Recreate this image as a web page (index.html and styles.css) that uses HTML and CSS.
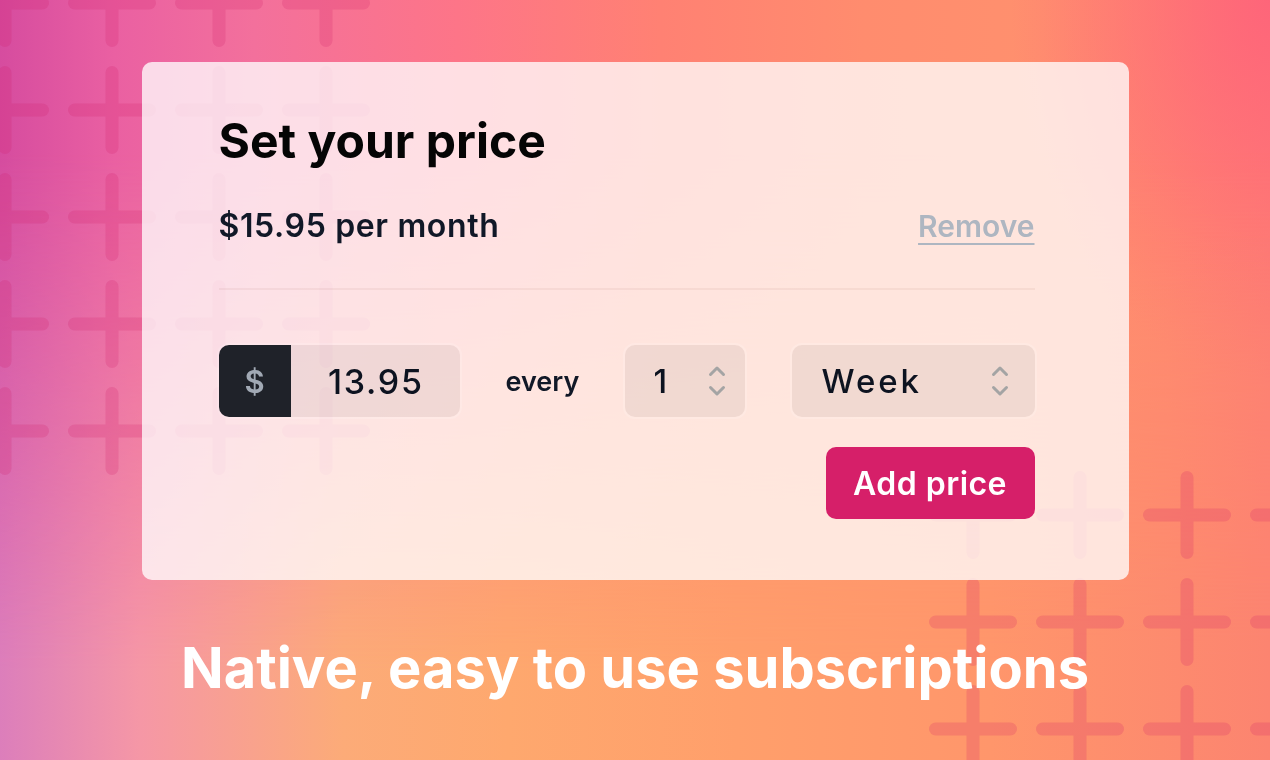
FILE: index.html
```html
<!DOCTYPE html>
<html lang="en">
<head>
<meta charset="utf-8">
<title>Set your price</title>
<link rel="stylesheet" href="styles.css">
</head>
<body>
<div class="page">
  <svg class="pattern" width="1270" height="760" viewBox="0 0 1270 760" aria-hidden="true">
    <defs>
      <g id="plus">
        <line x1="-37.5" y1="0" x2="37.5" y2="0"/>
        <line x1="0" y1="-37.5" x2="0" y2="37.5"/>
      </g>
    </defs>
    <g class="plus-group" opacity="0.2" stroke="#d0206a" stroke-width="13" stroke-linecap="round">
      <use href="#plus" x="5" y="3"/><use href="#plus" x="112" y="3"/><use href="#plus" x="219" y="3"/><use href="#plus" x="326" y="3"/>
      <use href="#plus" x="5" y="110"/><use href="#plus" x="112" y="110"/><use href="#plus" x="219" y="110"/><use href="#plus" x="326" y="110"/>
      <use href="#plus" x="5" y="217"/><use href="#plus" x="112" y="217"/><use href="#plus" x="219" y="217"/><use href="#plus" x="326" y="217"/>
      <use href="#plus" x="5" y="324"/><use href="#plus" x="112" y="324"/><use href="#plus" x="219" y="324"/><use href="#plus" x="326" y="324"/>
      <use href="#plus" x="5" y="431"/><use href="#plus" x="112" y="431"/><use href="#plus" x="219" y="431"/><use href="#plus" x="326" y="431"/>
    </g>
    <g class="plus-group" opacity="0.2" stroke="#d0206a" stroke-width="13" stroke-linecap="round">
      <use href="#plus" x="973" y="515"/><use href="#plus" x="1080" y="515"/><use href="#plus" x="1187" y="515"/><use href="#plus" x="1294" y="515"/>
      <use href="#plus" x="973" y="622"/><use href="#plus" x="1080" y="622"/><use href="#plus" x="1187" y="622"/><use href="#plus" x="1294" y="622"/>
      <use href="#plus" x="973" y="729"/><use href="#plus" x="1080" y="729"/><use href="#plus" x="1187" y="729"/><use href="#plus" x="1294" y="729"/>
    </g>
  </svg>

  <main class="content">
    <section class="card">
      <h1 class="card-title">Set your price</h1>
      <div class="price-row">
        <span class="price-current">$15.95 per month</span>
        <a class="remove" href="#">Remove</a>
      </div>
      <hr class="divider">
      <div class="input-row">
        <div class="amount">
          <span class="currency">$</span>
          <span class="amount-value">13.95</span>
        </div>
        <span class="every">every</span>
        <div class="select select-count">
          <span class="select-value">1</span>
          <svg class="chevrons" width="18" height="32" viewBox="0 0 18 32" aria-hidden="true">
            <polyline points="2.5,9.5 9,3 15.5,9.5"/>
            <polyline points="2.5,22.5 9,29 15.5,22.5"/>
          </svg>
        </div>
        <div class="select select-unit">
          <span class="select-value select-value-wide">Week</span>
          <svg class="chevrons" width="18" height="32" viewBox="0 0 18 32" aria-hidden="true">
            <polyline points="2.5,9.5 9,3 15.5,9.5"/>
            <polyline points="2.5,22.5 9,29 15.5,22.5"/>
          </svg>
        </div>
      </div>
      <div class="actions">
        <button class="btn-add" type="button">Add price</button>
      </div>
    </section>
    <h2 class="tagline">Native, easy to use subscriptions</h2>
  </main>
</div>
</body>
</html>
```

FILE: styles.css
```css
html, body {
  margin: 0;
  padding: 0;
}

body {
  font-family: Inter, "Noto Sans", "Liberation Sans", sans-serif;
}

.page {
  position: relative;
  width: 1270px;
  height: 760px;
  overflow: hidden;
  background:
    radial-gradient(ellipse 260px 380px at 100% 0%, rgba(254, 100, 122, 0.95) 0%, rgba(254, 100, 122, 0) 100%),
    linear-gradient(90deg,
      #d64c9f 0%,
      #ea60a2 9%,
      #f3709c 20%,
      #fd7588 36%,
      #ff8173 52%,
      #ff8c6e 68%,
      #ff906e 82%,
      #ff8a70 92%,
      #fe8074 100%);
}

.page::before {
  content: "";
  position: absolute;
  inset: 0;
  background: linear-gradient(90deg,
    #dc7ebb 0%,
    #f597a6 11%,
    #fcab78 27%,
    #fea86e 40%,
    #ff9f6b 58%,
    #ff966b 78%,
    #fc8470 100%);
  -webkit-mask-image: linear-gradient(to bottom, transparent 20%, #000 88%);
  mask-image: linear-gradient(to bottom, transparent 20%, #000 88%);
}

.pattern {
  position: absolute;
  left: 0;
  top: 0;
}

.content {
  position: relative;
  display: flex;
  flex-direction: column;
  align-items: center;
  padding-top: 62px;
}

.card {
  box-sizing: border-box;
  width: 987px;
  padding: 50px 94px 61px 77px;
  border-radius: 10px;
  background: rgba(255, 255, 255, 0.77);
}

.card-title {
  margin: 0;
  font-size: 48px;
  line-height: 58px;
  font-weight: 700;
  letter-spacing: 0;
  color: #050505;
}

.price-row {
  margin-top: 38px;
  display: flex;
  justify-content: space-between;
  align-items: baseline;
  font-size: 32px;
  line-height: 36px;
  font-weight: 600;
}

.price-current {
  color: #111827;
  letter-spacing: 0.02em;
}

.remove {
  color: #aeb6c1;
  font-size: 30px;
  text-decoration: underline;
  text-decoration-thickness: 2px;
  text-underline-offset: 6px;
}

.divider {
  margin: 44px 0 0;
  height: 2px;
  border: 0;
  background: rgba(140, 70, 50, 0.07);
}

.input-row {
  margin-top: 55px;
  height: 72px;
  display: flex;
  align-items: center;
  justify-content: space-between;
}

.amount {
  display: flex;
  width: 241px;
  height: 72px;
  border-radius: 10px;
  overflow: hidden;
  box-shadow: 0 0 0 2px rgba(255, 255, 255, 0.15);
}

.currency {
  width: 72px;
  display: flex;
  align-items: center;
  justify-content: center;
  background: #1f2229;
  color: #a1a9b4;
  font-size: 31px;
  font-weight: 600;
}

.amount-value {
  flex: 1;
  display: flex;
  align-items: center;
  justify-content: center;
  background: rgba(0, 0, 0, 0.055);
  color: #0d1320;
  font-size: 34px;
  font-weight: 500;
  letter-spacing: 0.05em;
  padding-left: 0.05em;
}

.every {
  font-size: 27px;
  font-weight: 600;
  color: #111827;
}

.select {
  box-sizing: border-box;
  height: 72px;
  display: flex;
  align-items: center;
  justify-content: space-between;
  border-radius: 10px;
  background: rgba(0, 0, 0, 0.055);
  box-shadow: 0 0 0 2px rgba(255, 255, 255, 0.15);
}

.select-count {
  width: 120px;
  padding: 0 19px 0 28px;
}

.select-unit {
  width: 243px;
  padding: 0 26px 0 30px;
}

.select-value {
  font-size: 33px;
  font-weight: 500;
  color: #0d1320;
}

.select-value-wide {
  letter-spacing: 0.09em;
}

.chevrons {
  fill: none;
  stroke: #a4a4a4;
  stroke-width: 3;
  stroke-linecap: round;
  stroke-linejoin: round;
}

.actions {
  margin-top: 30px;
  display: flex;
  justify-content: flex-end;
}

.btn-add {
  width: 209px;
  height: 72px;
  border: 0;
  border-radius: 10px;
  background: #d61f69;
  color: #ffffff;
  font-family: Inter, "Noto Sans", "Liberation Sans", sans-serif;
  font-size: 32px;
  font-weight: 600;
  letter-spacing: 0.015em;
  padding: 0;
}

.tagline {
  margin: 54px 0 0;
  font-size: 56px;
  line-height: 68px;
  font-weight: 700;
  color: #ffffff;
}
```
